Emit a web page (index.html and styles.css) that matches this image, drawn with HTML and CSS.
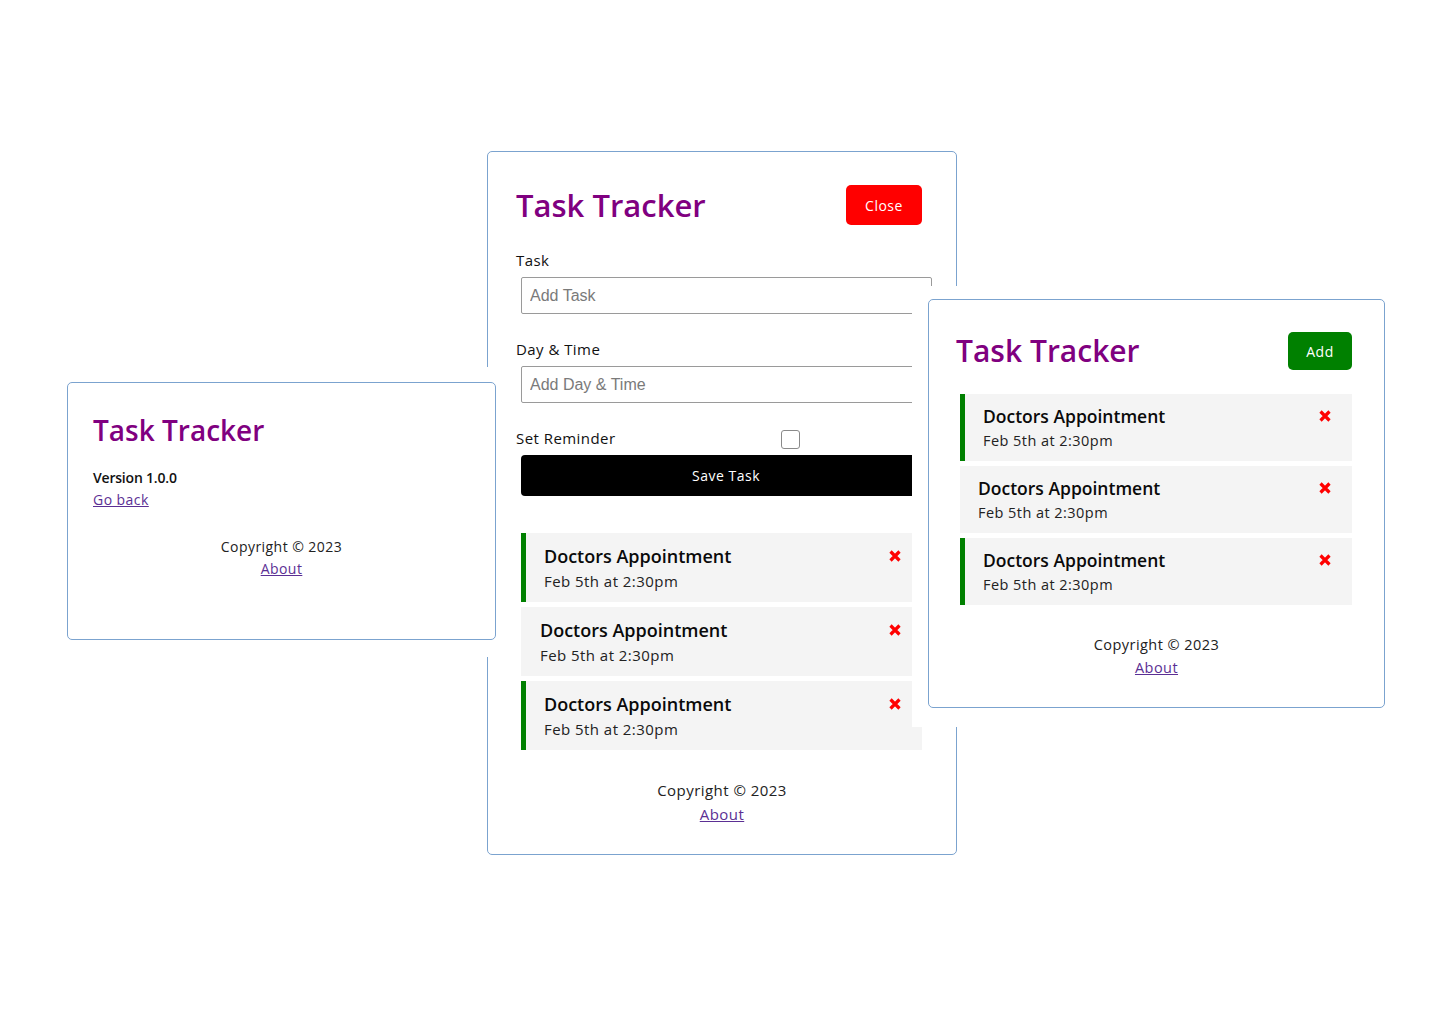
FILE: index.html
```html
<!DOCTYPE html>
<html lang="en">
<head>
<meta charset="utf-8">
<title>Task Tracker</title>
<link rel="stylesheet" href="styles.css">
</head>
<body>
<div class="desk">

  <section class="card card-form">
    <header class="head">
      <h1 class="title">Task Tracker</h1>
      <button class="btn btn-close" type="button">Close</button>
    </header>
    <form class="add-form">
      <div class="field">
        <label class="lbl">Task</label>
        <input class="inp" type="text" placeholder="Add Task">
      </div>
      <div class="field">
        <label class="lbl">Day &amp; Time</label>
        <input class="inp" type="text" placeholder="Add Day &amp; Time">
      </div>
      <div class="field field-check">
        <label class="lbl">Set Reminder</label>
        <span class="check"></span>
      </div>
      <button class="btn-save" type="button">Save Task</button>
    </form>
    <div class="tasks">
      <div class="task reminder">
        <div class="task-text"><h3>Doctors Appointment</h3><p>Feb 5th at 2:30pm</p></div>
        <svg class="x" viewBox="0 0 12 12"><path d="M1.5 1.5 L10.5 10.5 M10.5 1.5 L1.5 10.5"/></svg>
      </div>
      <div class="task">
        <div class="task-text"><h3>Doctors Appointment</h3><p>Feb 5th at 2:30pm</p></div>
        <svg class="x" viewBox="0 0 12 12"><path d="M1.5 1.5 L10.5 10.5 M10.5 1.5 L1.5 10.5"/></svg>
      </div>
      <div class="task reminder">
        <div class="task-text"><h3>Doctors Appointment</h3><p>Feb 5th at 2:30pm</p></div>
        <svg class="x" viewBox="0 0 12 12"><path d="M1.5 1.5 L10.5 10.5 M10.5 1.5 L1.5 10.5"/></svg>
      </div>
    </div>
    <footer class="foot">
      <p>Copyright &copy; 2023</p>
      <a href="#">About</a>
    </footer>
  </section>

  <div class="mask mask-left">
    <section class="card card-about">
      <h1 class="title">Task Tracker</h1>
      <h4 class="version">Version 1.0.0</h4>
      <a class="back" href="#">Go back</a>
      <footer class="foot">
        <p>Copyright &copy; 2023</p>
        <a href="#">About</a>
      </footer>
    </section>
  </div>

  <div class="mask mask-right">
    <section class="card card-list">
      <header class="head">
        <h1 class="title">Task Tracker</h1>
        <button class="btn btn-add" type="button">Add</button>
      </header>
      <div class="tasks">
        <div class="task reminder">
          <div class="task-text"><h3>Doctors Appointment</h3><p>Feb 5th at 2:30pm</p></div>
          <svg class="x" viewBox="0 0 12 12"><path d="M1.5 1.5 L10.5 10.5 M10.5 1.5 L1.5 10.5"/></svg>
        </div>
        <div class="task">
          <div class="task-text"><h3>Doctors Appointment</h3><p>Feb 5th at 2:30pm</p></div>
          <svg class="x" viewBox="0 0 12 12"><path d="M1.5 1.5 L10.5 10.5 M10.5 1.5 L1.5 10.5"/></svg>
        </div>
        <div class="task reminder">
          <div class="task-text"><h3>Doctors Appointment</h3><p>Feb 5th at 2:30pm</p></div>
          <svg class="x" viewBox="0 0 12 12"><path d="M1.5 1.5 L10.5 10.5 M10.5 1.5 L1.5 10.5"/></svg>
        </div>
      </div>
      <footer class="foot">
        <p>Copyright &copy; 2023</p>
        <a href="#">About</a>
      </footer>
    </section>
  </div>

</div>
</body>
</html>
```

FILE: styles.css
```css
* { box-sizing: border-box; }

html, body {
  margin: 0;
  padding: 0;
  background: #ffffff;
}

body {
  font-family: "Open Sans", "Noto Sans", sans-serif;
  letter-spacing: 0.45px;
  color: #111;
}

.desk {
  position: relative;
  width: 1440px;
  height: 1024px;
  overflow: hidden;
  background: #fff;
}

/* ---------- shared card ---------- */
.card {
  background: #fff;
  border: 1px solid #7ba3cf;
  border-radius: 5px;
}

.title {
  margin: 0;
  color: #800080;
  font-weight: 600;
  letter-spacing: 0;
  white-space: nowrap;
}

.head {
  display: flex;
  align-items: center;
  justify-content: space-between;
}

.btn {
  border: none;
  border-radius: 5px;
  color: #fff;
  font-family: inherit;
  letter-spacing: 0.5px;
  font-weight: 500;
  padding: 0;
}

.tasks {
  display: flex;
  flex-direction: column;
}

.task {
  display: flex;
  justify-content: space-between;
  align-items: flex-start;
  background: #f4f4f4;
}

.task.reminder {
  border-left: 5px solid #008000;
}

.task h3 {
  margin: 0;
  font-weight: 600;
  letter-spacing: 0;
  color: #0a0a0a;
  white-space: nowrap;
}

.task p {
  margin: 0;
  color: #222;
  white-space: nowrap;
}

.x {
  flex: none;
  width: 12px;
  height: 12px;
}

.x path {
  stroke: #ff0000;
  stroke-width: 3.2;
  stroke-linecap: butt;
  fill: none;
}

.foot {
  text-align: center;
}

.foot p {
  margin: 0;
  color: #222;
}

.foot a,
.back {
  color: #5b2f94;
  text-decoration: underline;
}

/* mask: white area that each overlaid screenshot carries around it */
.mask {
  position: absolute;
  background: #fff;
}

/* ---------- middle card (add form) ---------- */
.card-form {
  position: absolute;
  left: 487px;
  top: 151px;
  width: 470px;
  height: 704px;
  padding: 33px 28px 0 28px;
}

.card-form .head {
  width: 406px;
  height: 40px;
}

.card-form .title {
  font-size: 31px;
  line-height: 40px;
}

.btn-close {
  width: 76px;
  height: 40px;
  background: #ff0000;
  font-size: 14px;
}

.add-form {
  margin-top: 25px;
}

.field {
  margin-bottom: 25px;
}

.lbl {
  display: block;
  font-size: 15px;
  line-height: 20px;
  color: #111;
}

.inp {
  display: block;
  width: 411px;
  height: 37px;
  margin: 7px 0 0 5px;
  padding: 0 8px;
  border: 1px solid #9a9a9a;
  border-radius: 2px;
  font-family: "Liberation Sans", Arial, sans-serif;
  letter-spacing: 0;
  font-size: 16px;
  color: #222;
  background: #fff;
}

.inp::placeholder {
  color: #7a7a7a;
}

.field-check {
  display: flex;
  align-items: center;
  height: 20px;
  margin-bottom: 7px;
}

.field-check .lbl {
  width: 265px;
}

.check {
  width: 19px;
  height: 19px;
  margin-top: 3px;
  border: 1px solid #8a8a8a;
  border-radius: 3px;
  background: #fff;
}

.btn-save {
  display: block;
  width: 410px;
  height: 41px;
  margin-left: 5px;
  border: none;
  border-radius: 4px;
  background: #000;
  color: #fff;
  font-family: inherit;
  font-weight: 500;
  letter-spacing: 0.5px;
  font-size: 14px;
}

.card-form .tasks {
  margin: 37px 0 0 5px;
  width: 401px;
  gap: 5px;
}

.card-form .task {
  height: 69px;
  padding: 10px 21px 0 19px;
}

.card-form .task.reminder {
  padding-left: 18px;
}

.card-form .task h3 {
  font-size: 18px;
  line-height: 26px;
}

.card-form .task p {
  font-size: 15px;
  line-height: 24px;
}

.card-form .x {
  margin-top: 7px;
}

.card-form .foot {
  margin-top: 28px;
  font-size: 15px;
  line-height: 24px;
}

/* ---------- right card (task list) ---------- */
.mask-right {
  left: 912px;
  top: 286px;
  padding: 13px 16px 19px 16px;
}

.card-list {
  width: 457px;
  height: 409px;
  padding: 32px 27px 0 27px;
}

.card-list .head {
  width: 396px;
  height: 38px;
}

.card-list .title {
  font-size: 30px;
  line-height: 38px;
}

.btn-add {
  width: 64px;
  height: 38px;
  background: #008000;
  font-size: 14px;
}

.card-list .tasks {
  margin: 24px 0 0 4px;
  width: 392px;
  gap: 5px;
}

.card-list .task {
  height: 67px;
  padding: 10px 21px 0 18px;
}

.card-list .task h3 {
  font-size: 17.5px;
  line-height: 25px;
}

.card-list .task p {
  font-size: 14.5px;
  line-height: 23px;
}

.card-list .x {
  margin-top: 6px;
}

.card-list .foot {
  margin-top: 28px;
  font-size: 14.5px;
  line-height: 23px;
}

/* ---------- left card (about) ---------- */
.mask-left {
  left: 51px;
  top: 367px;
  padding: 15px 16px 17px 16px;
}

.card-about {
  width: 429px;
  height: 258px;
  padding: 29px 25px 0 25px;
}

.card-about .title {
  font-size: 28px;
  line-height: 36px;
}

.version {
  margin: 19px 0 0 0;
  font-size: 14px;
  line-height: 21px;
  font-weight: 600;
  letter-spacing: -0.2px;
  color: #111;
}

.back {
  display: inline-block;
  font-size: 14px;
  line-height: 21px;
}

.card-about .foot {
  margin-top: 26px;
  font-size: 14px;
  line-height: 21px;
}

.card-about .foot a {
  display: inline-block;
  margin-top: 1px;
}
```
